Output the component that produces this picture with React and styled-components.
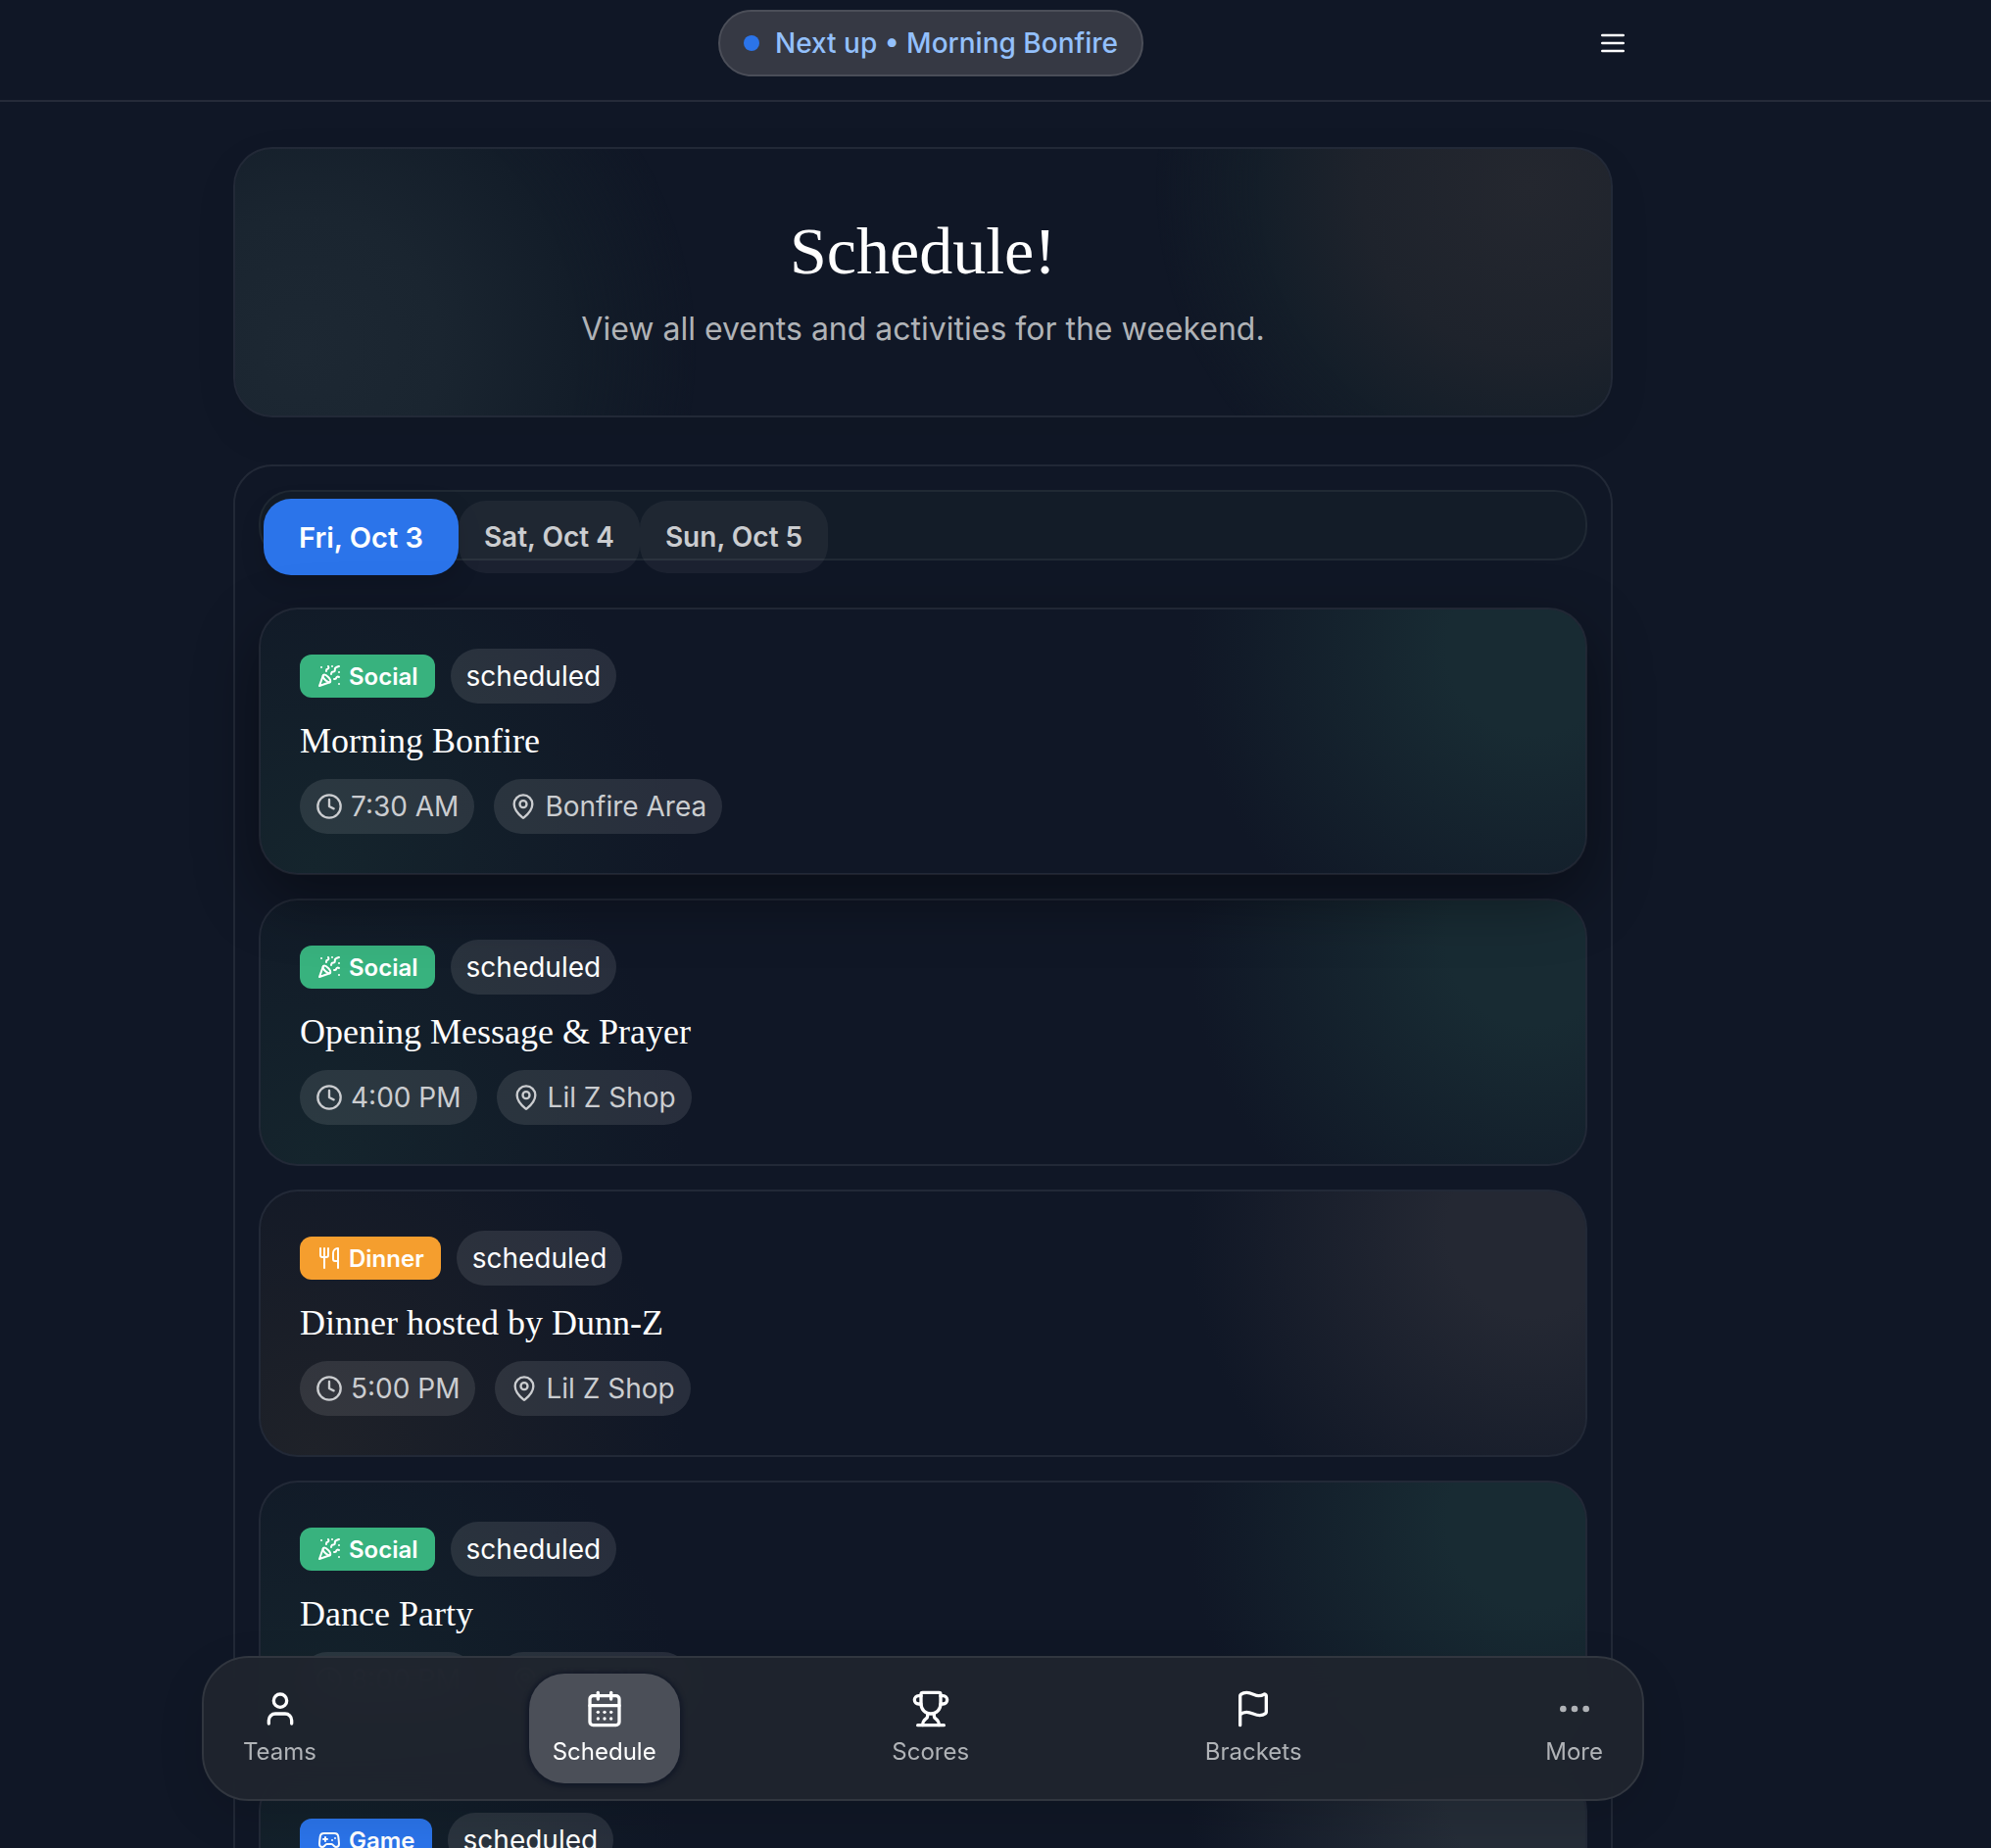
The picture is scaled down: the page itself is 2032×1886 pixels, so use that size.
import React, { useState } from 'react';
import styled, { createGlobalStyle } from 'styled-components';
import {
  CalendarDays,
  Clock,
  Ellipsis,
  Flag,
  Gamepad2,
  MapPin,
  PartyPopper,
  Trophy,
  User,
  Utensils,
} from 'lucide-react';

const DAYS = ['Fri, Oct 3', 'Sat, Oct 4', 'Sun, Oct 5'];

const KINDS = {
  social: {
    label: 'Social',
    icon: PartyPopper,
    color: '#38b27e',
    left: '#15252d',
    right: '#182b33',
  },
  dinner: {
    label: 'Dinner',
    icon: Utensils,
    color: '#f59e2e',
    left: '#1f2229',
    right: '#242833',
  },
  game: {
    label: 'Game',
    icon: Gamepad2,
    color: '#2b74ea',
    left: '#14232c',
    right: '#252d38',
  },
};

const EVENTS = [
  { id: 1, kind: 'social', status: 'scheduled', title: 'Morning Bonfire', time: '7:30 AM', place: 'Bonfire Area', next: true },
  { id: 2, kind: 'social', status: 'scheduled', title: 'Opening Message & Prayer', time: '4:00 PM', place: 'Lil Z Shop' },
  { id: 3, kind: 'dinner', status: 'scheduled', title: 'Dinner hosted by Dunn-Z', time: '5:00 PM', place: 'Lil Z Shop' },
  { id: 4, kind: 'social', status: 'scheduled', title: 'Dance Party', time: '8:00 PM', place: 'Lil Z Shop' },
  { id: 5, kind: 'game', status: 'scheduled' },
];

const LINKS = [
  { label: 'Teams', icon: User },
  { label: 'Schedule', icon: CalendarDays, active: true },
  { label: 'Scores', icon: Trophy },
  { label: 'Brackets', icon: Flag },
];

const EventCard = ({ event }) => {
  const kind = KINDS[event.kind];
  const Icon = kind.icon;

  return (
    <Card $left={kind.left} $right={kind.right} $next={event.next}>
      <BadgeRow>
        <Badge $color={kind.color}>
          <Icon size={24} />
          {kind.label}
        </Badge>
        <Status>{event.status}</Status>
      </BadgeRow>
      {event.title && <CardTitle>{event.title}</CardTitle>}
      {event.time && (
        <MetaRow>
          <Chip>
            <Clock size={28} />
            {event.time}
          </Chip>
          <Chip>
            <MapPin size={28} />
            {event.place}
          </Chip>
        </MetaRow>
      )}
    </Card>
  );
};

const App = () => {
  const [day, setDay] = useState(DAYS[0]);

  return (
    <>
      <GlobalStyle />
      <Page>
        <Header>
          <HeaderInner>
            <HeaderSpacer />
            <NextUp href="#next">
              <Dot />
              Next up • Morning Bonfire
            </NextUp>
            <MenuButton type="button" aria-label="Open menu">
              <svg width="32" height="32" viewBox="0 0 24 24" fill="none" stroke="currentColor" strokeWidth="2" strokeLinecap="round">
                <path d="M4 6h16M4 12h16M4 18h16" />
              </svg>
            </MenuButton>
          </HeaderInner>
        </Header>

        <Main>
          <Hero>
            <HeroTitle>Schedule!</HeroTitle>
            <HeroText>View all events and activities for the weekend.</HeroText>
          </Hero>

          <Panel>
            <TabBar role="tablist" aria-label="Day">
              {DAYS.map((d) => (
                <Tab
                  key={d}
                  type="button"
                  role="tab"
                  aria-selected={d === day}
                  $active={d === day}
                  onClick={() => setDay(d)}
                >
                  {d}
                </Tab>
              ))}
            </TabBar>
            <EventList>
              {EVENTS.map((event) => (
                <EventCard key={event.id} event={event} />
              ))}
            </EventList>
          </Panel>
        </Main>
      </Page>

      <Dock>
        <DockBar aria-label="Main">
          {LINKS.map(({ label, icon: Icon, active }) => (
            <DockLink
              key={label}
              href={`#${label.toLowerCase()}`}
              aria-current={active ? 'page' : undefined}
              $active={active}
            >
              <Icon size={40} />
              <span>{label}</span>
            </DockLink>
          ))}
          <MoreButton as="button" type="button">
            <Ellipsis size={40} />
            <span>More</span>
          </MoreButton>
        </DockBar>
      </Dock>
    </>
  );
};

const GlobalStyle = createGlobalStyle`
  *, *::before, *::after {
    box-sizing: border-box;
  }
  body {
    margin: 0;
    background: #101726;
    color: #ffffff;
    font-family: Inter, "Liberation Sans", sans-serif;
    font-size: 28px;
  }
  h1, h2, p {
    margin: 0;
  }
  button {
    font: inherit;
    color: inherit;
    border: 0;
    background: none;
    cursor: pointer;
  }
  a {
    color: inherit;
    text-decoration: none;
  }
`;

const Page = styled.div`
  height: 100vh;
  overflow-y: auto;
  scrollbar-width: none;
`;

const Header = styled.header`
  padding: 10px 148px 24px 0;
  border-bottom: 2px solid rgba(255, 255, 255, 0.09);
`;

const HeaderInner = styled.div`
  display: flex;
  align-items: center;
  justify-content: space-between;
  width: 100%;
  max-width: 1472px;
  margin: 0 auto;
`;

const HeaderSpacer = styled.div`
  width: 80px;
`;

const NextUp = styled.a`
  display: flex;
  align-items: center;
  gap: 16px;
  height: 68px;
  padding: 0 24px;
  border: 2px solid #4b4e58;
  border-radius: 34px;
  background: #363944;
  color: #93c0fc;
  font-weight: 500;
`;

const Dot = styled.span`
  width: 16px;
  height: 16px;
  border-radius: 50%;
  background: #2b74ea;
`;

const MenuButton = styled.button`
  display: flex;
  padding: 16px;
`;

const Main = styled.main`
  display: flex;
  flex-direction: column;
  align-items: center;
  gap: 48px;
  padding: 46px 148px 190px 0;
`;

const Hero = styled.section`
  display: flex;
  flex-direction: column;
  align-items: center;
  gap: 16px;
  width: 100%;
  max-width: 1408px;
  padding: 64px;
  border: 2px solid rgba(255, 255, 255, 0.08);
  border-radius: 40px;
  background:
    radial-gradient(circle 400px at 5% 76%, #1d2833, #1a2530 35%, #131d29 70%, transparent),
    radial-gradient(circle 380px at 94% 14%, #24272f, #1e232c 45%, #141e29 72%, transparent);
  background-clip: padding-box;
  box-shadow: 0 16px 48px rgba(0, 0, 0, 0.06);
`;

const HeroTitle = styled.h1`
  font-family: "Liberation Serif", "Times New Roman", serif;
  font-size: 68px;
  font-weight: 400;
  line-height: 80px;
`;

const HeroText = styled.p`
  color: #b0b3b7;
  font-size: 32px;
  line-height: 48px;
`;

const Panel = styled.section`
  display: flex;
  flex-direction: column;
  gap: 48px;
  width: 100%;
  max-width: 1408px;
  padding: 24px;
  border: 2px solid rgba(255, 255, 255, 0.08);
  border-radius: 40px;
`;

const TabBar = styled.div`
  display: flex;
  align-items: flex-start;
  height: 72px;
  padding: 7px 3px;
  border: 2px solid rgba(255, 255, 255, 0.06);
  border-radius: 34px;
  background: #131c28;
`;

const Tab = styled.button`
  height: ${({ $active }) => ($active ? '78px' : '74px')};
  margin-top: ${({ $active }) => ($active ? '0' : '2px')};
  padding: 0 ${({ $active }) => ($active ? '36px' : '26px')};
  border-radius: 28px;
  background: ${({ $active }) => ($active ? '#2b74ea' : 'rgba(255, 255, 255, 0.05)')};
  box-shadow: ${({ $active }) => ($active ? '0 8px 24px rgba(0, 0, 0, 0.15)' : 'none')};
  color: ${({ $active }) => ($active ? '#ffffff' : '#cbcdd0')};
  font-size: ${({ $active }) => ($active ? '29px' : '28px')};
  font-weight: 600;
  white-space: nowrap;
`;

const EventList = styled.div`
  display: flex;
  flex-direction: column;
  gap: 24px;
`;

const Card = styled.article`
  padding: 40px;
  border: 2px solid rgba(255, 255, 255, 0.08);
  border-radius: 40px;
  background:
    radial-gradient(circle 380px at 4% 100%, ${({ $left }) => $left}, transparent),
    radial-gradient(circle 350px at 96% 15%, ${({ $right }) => $right}, ${({ $right }) => $right} 25%, transparent),
    #101726;
  background-clip: padding-box;
  ${({ $next }) => $next && `
    position: relative;
    z-index: 1;
    box-shadow: 0 24px 64px rgba(0, 0, 0, 0.4);
  `}
`;

const BadgeRow = styled.div`
  display: flex;
  align-items: center;
  gap: 16px;
`;

const Badge = styled.span`
  display: flex;
  align-items: center;
  gap: 8px;
  height: 44px;
  padding: 0 17px 0 18px;
  border-radius: 12px;
  background: ${({ $color }) => $color};
  font-size: 24px;
  font-weight: 600;
`;

const Status = styled.span`
  display: flex;
  align-items: center;
  height: 56px;
  padding: 0 16px;
  border-radius: 28px;
  background: rgba(255, 255, 255, 0.1);
`;

const CardTitle = styled.h2`
  margin: 16px 0;
  font-family: "Liberation Serif", "Times New Roman", serif;
  font-size: 36px;
  font-weight: 400;
  line-height: 45px;
`;

const MetaRow = styled.div`
  display: flex;
  gap: 20px;
`;

const Chip = styled.span`
  display: flex;
  align-items: center;
  gap: 8px;
  height: 56px;
  padding: 0 16px;
  border-radius: 28px;
  background: rgba(255, 255, 255, 0.1);
  color: #cbcdd0;
`;

const Dock = styled.div`
  position: fixed;
  right: 148px;
  bottom: 48px;
  left: 0;
  z-index: 2;
  display: flex;
  justify-content: center;
`;

const DockBar = styled.nav`
  display: flex;
  justify-content: space-between;
  width: 100%;
  max-width: 1472px;
  padding: 16px;
  border: 2px solid #31363f;
  border-radius: 48px;
  background: rgba(31, 36, 45, 0.97);
  backdrop-filter: blur(24px);
  box-shadow: 0 16px 48px rgba(0, 0, 0, 0.12);
`;

const DockLink = styled.a`
  display: flex;
  flex-direction: column;
  align-items: center;
  gap: 8px;
  padding: 16px 24px;
  border-radius: 36px;
  background: ${({ $active }) => ($active ? '#4b4f58' : 'transparent')};
  box-shadow: ${({ $active }) => ($active ? '0 1px 4px 3px #141a28' : 'none')};
  color: #ffffff;
  font-size: 24px;
  line-height: 32px;

  span {
    color: ${({ $active }) => ($active ? '#ffffff' : '#b0b3b7')};
  }
`;

const MoreButton = styled(DockLink)`
  margin-left: 8px;
  color: #b0b3b7;
`;

export default App;
